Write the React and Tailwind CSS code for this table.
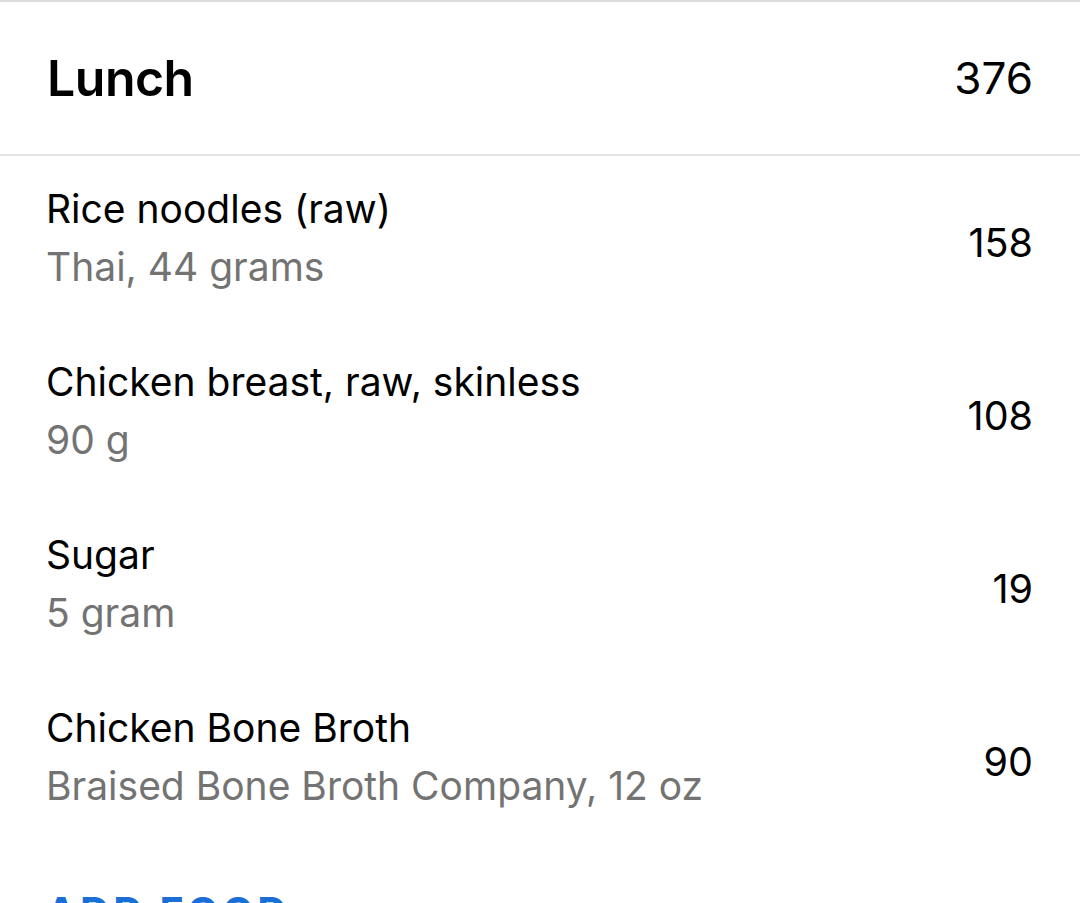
import React from "react";

const items = [
  { name: "Rice noodles (raw)", detail: "Thai, 44 grams", kcal: 158 },
  { name: "Chicken breast, raw, skinless", detail: "90 g", kcal: 108 },
  { name: "Sugar", detail: "5 gram", kcal: 19 },
  { name: "Chicken Bone Broth", detail: "Braised Bone Broth Company, 12 oz", kcal: 90 },
];

const FoodRow = ({ name, detail, kcal }) => (
  <div className="h-[173px] pl-[46px] pr-[47px] flex items-center justify-between">
    <div className="flex flex-col gap-[10px] pb-[10px]">
      <span className="text-[39px] leading-[48px] text-black">{name}</span>
      <span className="text-[39px] leading-[48px] text-[#737373]">{detail}</span>
    </div>
    <span className="text-[39.5px] leading-[48px] text-black">{kcal}</span>
  </div>
);

const App = () => {
  return (
    <div
      className="w-[1080px] h-[903px] overflow-hidden bg-white border-t-2 border-[#dcdcdc]"
      style={{ fontFamily: "Inter, 'Liberation Sans', sans-serif" }}
    >
      <div className="h-[154px] pl-[47px] pr-[47px] flex items-center justify-between border-b-2 border-[#e6e6e6]">
        <span className="text-[50px] font-semibold tracking-[-0.5px] text-black">Lunch</span>
        <span className="text-[44px] text-black">376</span>
      </div>
      {items.map((it) => (
        <FoodRow key={it.name} {...it} />
      ))}
      <div className="pl-[46px] pt-[34px]">
        <span className="text-[41px] font-bold tracking-[3.5px] text-[#1a6fd6]">ADD FOOD</span>
      </div>
    </div>
  );
};

export default App;
